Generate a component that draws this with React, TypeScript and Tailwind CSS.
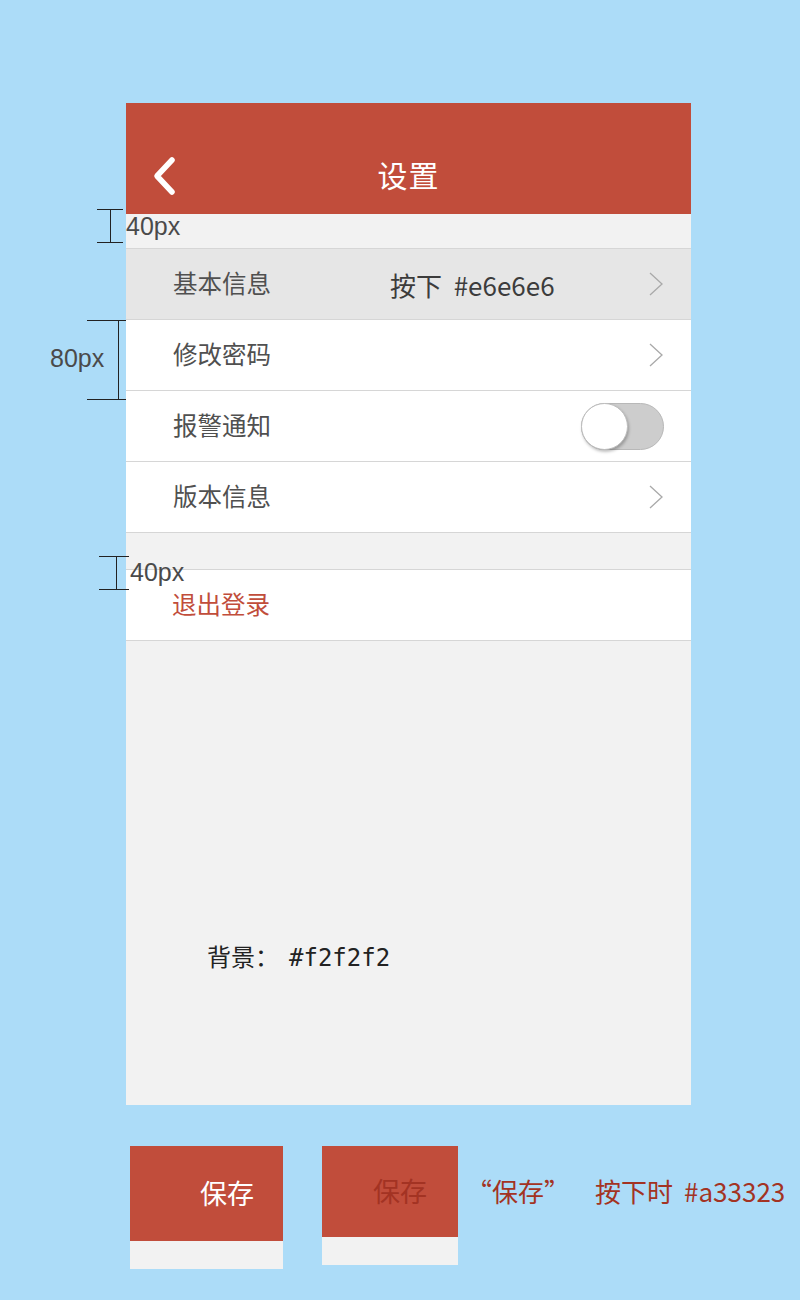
import React from "react";

const ROWS = [
  { label: "基本信息", kind: "link", pressed: true },
  { label: "修改密码", kind: "link" },
  { label: "报警通知", kind: "toggle" },
  { label: "版本信息", kind: "link" },
];

function Chevron() {
  return (
    <svg width="16" height="24" viewBox="0 0 16 24" className="shrink-0">
      <path d="M2 1 L14 12 L2 23" fill="none" stroke="#a9a9a9" strokeWidth="1.3" />
    </svg>
  );
}

function Toggle() {
  return (
    <div className="relative w-[83px] h-[47px] rounded-full bg-[#cdcdcd] border border-[#b8b8b8]">
      <div className="absolute left-[-1px] top-[-1px] w-[47px] h-[47px] rounded-full bg-white border border-[#bdbdbd] shadow-[1px_2px_3px_rgba(0,0,0,0.25)]" />
    </div>
  );
}

// bracket marks used by the design notes
function Bracket({ left, top, width, height, stem }: { left: number; top: number; width: number; height: number; stem: number }) {
  return (
    <div className="absolute" style={{ left, top, width, height }}>
      <div className="absolute left-0 right-0 top-0 h-px bg-[#222]" />
      <div className="absolute left-0 right-0 bottom-0 h-px bg-[#222]" />
      <div className="absolute top-0 bottom-0 w-px bg-[#222]" style={{ left: stem }} />
    </div>
  );
}

export default function App() {
  return (
    <div className="relative w-[800px] h-[1300px] bg-[#acdcf8] font-['Noto_Sans_CJK_SC',sans-serif] overflow-hidden">
      <div className="flex flex-col pt-[103px]">
        {/* phone panel */}
        <div className="ml-[126px] w-[565px] h-[1002px] bg-[#f2f2f2] flex flex-col">
          <div className="h-[111px] bg-[#c14d3b] flex flex-col">
            <div className="h-[40px]" />
            <div className="relative flex-1 flex items-center justify-center">
              <svg width="30" height="42" viewBox="0 0 30 42" className="absolute left-[24px] top-[12px]">
                <path d="M22 5 L7 21 L22 37" fill="none" stroke="#fff" strokeWidth="5.5" strokeLinecap="round" strokeLinejoin="round" />
              </svg>
              <span className="text-[30px] leading-none text-white tracking-[1px] -mt-[10px]">设置</span>
            </div>
          </div>

          <div className="h-[34px]" />

          <div className="border-t border-[#d6d6d6]">
            {ROWS.map((r) => (
              <div
                key={r.label}
                className={
                  "relative h-[71px] flex items-center justify-between pl-[47px] border-b border-[#d6d6d6] " +
                  (r.pressed ? "bg-[#e6e6e6]" : "bg-white")
                }
              >
                <span className="text-[24.5px] leading-none text-[#505050] -mt-[2px]">{r.label}</span>
                {r.pressed && (
                  <span className="absolute left-[264px] top-[23px] text-[26px] leading-none text-[#3c3c3c]">
                    按下&nbsp;&nbsp;#e6e6e6
                  </span>
                )}
                {r.kind === "toggle" ? (
                  <div className="mr-[27px]"><Toggle /></div>
                ) : (
                  <div className="mr-[27px]"><Chevron /></div>
                )}
              </div>
            ))}
          </div>

          <div className="h-[36px]" />

          <div className="h-[72px] bg-white border-t border-b border-[#d6d6d6] flex items-center pl-[46px]">
            <span className="text-[24.5px] leading-none text-[#c14d3b] -mt-[2px]">退出登录</span>
          </div>

          <div className="pl-[81px] pt-[303px] flex items-baseline text-[#222] leading-none">
            <span className="text-[24px]">背景：</span>
            <span className="text-[24px] ml-[10px] font-['DejaVu_Sans_Mono',monospace]">#f2f2f2</span>
          </div>
        </div>

        {/* save button states */}
        <div className="ml-[130px] mt-[41px] flex items-start">
          <div className="w-[153px] shrink-0 flex flex-col">
            <div className="h-[95px] bg-[#c14d3b] flex items-center pl-[70px]">
              <span className="text-[27px] leading-none text-white -mt-[2px]">保存</span>
            </div>
            <div className="h-[28px] bg-[#f2f2f2]" />
          </div>
          <div className="ml-[39px] w-[136px] shrink-0 flex flex-col">
            <div className="h-[91px] bg-[#c14d3b] flex items-center pl-[51px]">
              <span className="text-[27px] leading-none text-[#a33323] -mt-[3px]">保存</span>
            </div>
            <div className="h-[28px] bg-[#f2f2f2]" />
          </div>
          <div className="ml-[8px] mt-[32px] flex items-baseline text-[26px] leading-none text-[#a33323] whitespace-nowrap">
            <span>“保存”</span>
            <span className="ml-[25px]">按下时</span>
            <span className="ml-[11px]">#a33323</span>
          </div>
        </div>
      </div>

      {/* design notes */}
      <Bracket left={97} top={209} width={26} height={34} stem={13} />
      <span className="absolute left-[126px] top-[214px] text-[25px] leading-none text-[#4a4a4a] font-['Liberation_Sans',sans-serif]">40px</span>

      <Bracket left={87} top={320} width={39} height={80} stem={31} />
      <span className="absolute left-[50px] top-[346px] text-[25px] leading-none text-[#4a4a4a] font-['Liberation_Sans',sans-serif]">80px</span>

      <Bracket left={99} top={556} width={30} height={34} stem={17} />
      <span className="absolute left-[130px] top-[560px] text-[25px] leading-none text-[#4a4a4a] font-['Liberation_Sans',sans-serif]">40px</span>
    </div>
  );
}
